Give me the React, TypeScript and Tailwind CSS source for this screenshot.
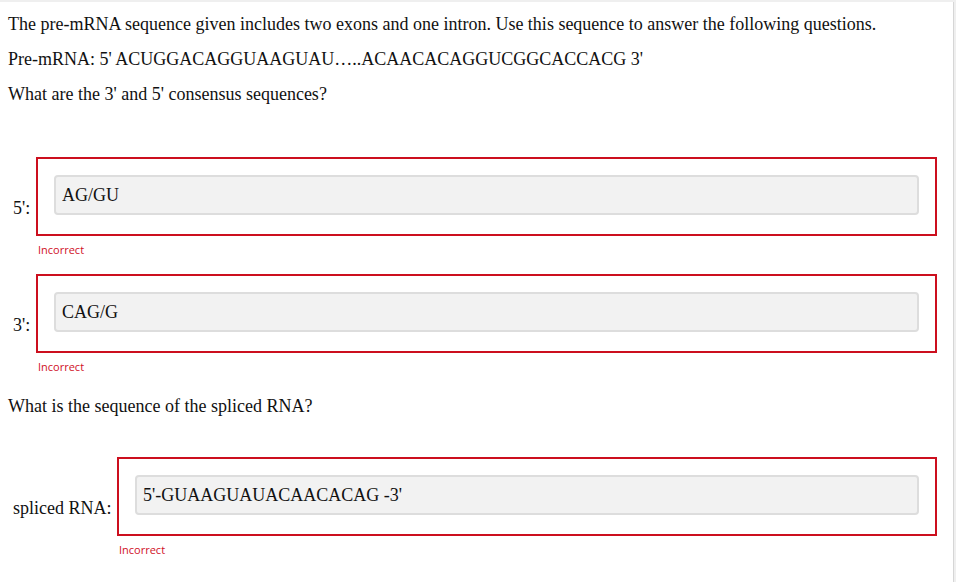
const serif = { fontFamily: '"Liberation Serif", "Times New Roman", serif' };

interface Resposta {
  id: string;
  label: string;
  value: string;
  labelWidth: string;
}

const AnswerRow = ({ r }: { r: Resposta }) => (
  <div className="flex items-center">
    <div className={`${r.labelWidth} pl-[5px] shrink-0 text-[18px] leading-[20px] text-[#111]`}>{r.label}</div>
    <div className="flex-1">
      <div className="border-2 border-[#cc0f1e] pt-[16px] pb-[19px] px-[16px]">
        <input
          type="text"
          readOnly
          value={r.value}
          style={serif}
          className="w-full h-[40px] bg-[#f2f2f2] border-2 border-[#dddddd] rounded-[4px] pl-[6px] text-[18px] text-[#111] outline-none"
        />
      </div>
      <div
        className="mt-[6px] pl-[2px] h-[16px] leading-[16px] text-[11px] text-[#d0101f]"
        style={{ fontFamily: '"Open Sans", sans-serif' }}
      >
        Incorrect
      </div>
    </div>
  </div>
);

export default function App() {
  const consenso: Resposta[] = [
    { id: 'c5', label: "5':", value: 'AG/GU', labelWidth: 'w-[28px]' },
    { id: 'c3', label: "3':", value: 'CAG/G', labelWidth: 'w-[28px]' },
  ];

  return (
    <div className="min-h-screen bg-[#efefef] pt-[2px]">
      <div className="w-[954px] min-h-[580px] bg-white border-r border-[#d6d6d6] pl-[8px] pr-[16px] pt-[12px] pb-[20px] text-[#111]" style={serif}>
        <p className="text-[18px] leading-[20px] mb-[15px]">
          The pre-mRNA sequence given includes two exons and one intron. Use this sequence to answer the following questions.
        </p>
        <p className="text-[18px] leading-[20px] mb-[15px]">
          Pre-mRNA: 5' ACUGGACAGGUAAGUAU…..ACAACACAGGUCGGCACCACG 3'
        </p>
        <p className="text-[18px] leading-[20px] mb-[53px]">What are the 3' and 5' consensus sequences?</p>

        <div className="flex flex-col gap-[16px]">
          {consenso.map(r => (
            <AnswerRow key={r.id} r={r} />
          ))}
        </div>

        <p className="text-[18px] leading-[20px] mt-[21px] mb-[41px]">What is the sequence of the spliced RNA?</p>

        <AnswerRow r={{ id: 'rna', label: 'spliced RNA:', value: "5'-GUAAGUAUACAACACAG -3'", labelWidth: 'w-[109px]' }} />
      </div>
    </div>
  );
}
